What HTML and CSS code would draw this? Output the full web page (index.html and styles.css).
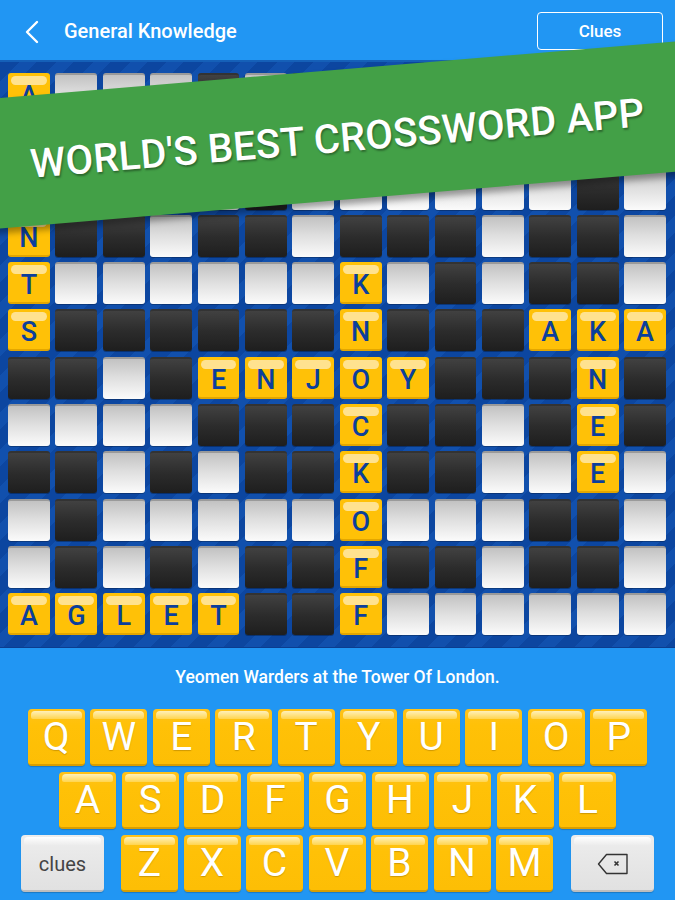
FILE: index.html
```html
<!DOCTYPE html>
<html>
<head>
<meta charset="utf-8">
<link rel="stylesheet" href="styles.css">
</head>
<body>
<div class="app">
  <header class="topbar">
    <div class="back"><svg width="16" height="24" viewBox="0 0 16 24"><path d="M13 2 L3 12 L13 22" fill="none" stroke="#fff" stroke-width="2.4" stroke-linecap="round" stroke-linejoin="round"/></svg></div>
    <div class="title">General Knowledge</div>
    <div class="clues-btn">Clues</div>
  </header>
  <section class="board">
    <div class="grid">
      <div class="c y">A</div><div class="c w"></div><div class="c w"></div><div class="c w"></div><div class="c d"></div><div class="c w"></div><div class="c d"></div><div class="c w"></div><div class="c w"></div><div class="c d"></div><div class="c w"></div><div class="c w"></div><div class="c d"></div><div class="c w"></div>
      <div class="c y">G</div><div class="c d"></div><div class="c w"></div><div class="c d"></div><div class="c w"></div><div class="c d"></div><div class="c w"></div><div class="c d"></div><div class="c d"></div><div class="c w"></div><div class="c d"></div><div class="c d"></div><div class="c w"></div><div class="c w"></div>
      <div class="c y">E</div><div class="c w"></div><div class="c w"></div><div class="c w"></div><div class="c w"></div><div class="c d"></div><div class="c w"></div><div class="c w"></div><div class="c w"></div><div class="c w"></div><div class="c w"></div><div class="c w"></div><div class="c d"></div><div class="c w"></div>
      <div class="c y">N</div><div class="c d"></div><div class="c d"></div><div class="c w"></div><div class="c d"></div><div class="c d"></div><div class="c w"></div><div class="c d"></div><div class="c d"></div><div class="c d"></div><div class="c w"></div><div class="c d"></div><div class="c d"></div><div class="c w"></div>
      <div class="c y">T</div><div class="c w"></div><div class="c w"></div><div class="c w"></div><div class="c w"></div><div class="c w"></div><div class="c w"></div><div class="c y">K</div><div class="c w"></div><div class="c d"></div><div class="c w"></div><div class="c d"></div><div class="c d"></div><div class="c w"></div>
      <div class="c y">S</div><div class="c d"></div><div class="c d"></div><div class="c d"></div><div class="c d"></div><div class="c d"></div><div class="c d"></div><div class="c y">N</div><div class="c d"></div><div class="c d"></div><div class="c d"></div><div class="c y">A</div><div class="c y">K</div><div class="c y">A</div>
      <div class="c d"></div><div class="c d"></div><div class="c w"></div><div class="c d"></div><div class="c y">E</div><div class="c y">N</div><div class="c y">J</div><div class="c y">O</div><div class="c y">Y</div><div class="c d"></div><div class="c d"></div><div class="c d"></div><div class="c y">N</div><div class="c d"></div>
      <div class="c w"></div><div class="c w"></div><div class="c w"></div><div class="c w"></div><div class="c d"></div><div class="c d"></div><div class="c d"></div><div class="c y">C</div><div class="c d"></div><div class="c d"></div><div class="c w"></div><div class="c d"></div><div class="c y">E</div><div class="c d"></div>
      <div class="c d"></div><div class="c d"></div><div class="c w"></div><div class="c d"></div><div class="c w"></div><div class="c d"></div><div class="c d"></div><div class="c y">K</div><div class="c d"></div><div class="c d"></div><div class="c w"></div><div class="c w"></div><div class="c y">E</div><div class="c w"></div>
      <div class="c w"></div><div class="c d"></div><div class="c w"></div><div class="c w"></div><div class="c w"></div><div class="c w"></div><div class="c w"></div><div class="c y">O</div><div class="c w"></div><div class="c w"></div><div class="c w"></div><div class="c d"></div><div class="c d"></div><div class="c w"></div>
      <div class="c w"></div><div class="c d"></div><div class="c w"></div><div class="c d"></div><div class="c w"></div><div class="c d"></div><div class="c d"></div><div class="c y">F</div><div class="c d"></div><div class="c d"></div><div class="c w"></div><div class="c d"></div><div class="c d"></div><div class="c w"></div>
      <div class="c y">A</div><div class="c y">G</div><div class="c y">L</div><div class="c y">E</div><div class="c y">T</div><div class="c d"></div><div class="c d"></div><div class="c y">F</div><div class="c w"></div><div class="c w"></div><div class="c w"></div><div class="c w"></div><div class="c w"></div><div class="c w"></div>
    </div>
  </section>
  <section class="bottom">
    <div class="clue">Yeomen Warders at the Tower Of London.</div>
    <div class="keyboard">
      <div class="krow">
        <div class="key">Q</div><div class="key">W</div><div class="key">E</div><div class="key">R</div><div class="key">T</div><div class="key">Y</div><div class="key">U</div><div class="key">I</div><div class="key">O</div><div class="key">P</div>
      </div>
      <div class="krow">
        <div class="key">A</div><div class="key">S</div><div class="key">D</div><div class="key">F</div><div class="key">G</div><div class="key">H</div><div class="key">J</div><div class="key">K</div><div class="key">L</div>
      </div>
      <div class="krow">
        <div class="key gray cluekey">clues</div>
        <div class="key">Z</div><div class="key">X</div><div class="key">C</div><div class="key">V</div><div class="key">B</div><div class="key">N</div><div class="key">M</div>
        <div class="key gray bskey"><svg width="32" height="22" viewBox="0 0 32 22"><path d="M9.5 1.5 H30 V20.5 H9.5 L1.5 11 Z" fill="none" stroke="#333" stroke-width="1.4" stroke-linejoin="round"/><path d="M17.5 8.5 L21.5 12.5 M21.5 8.5 L17.5 12.5" stroke="#333" stroke-width="1.6"/></svg></div>
      </div>
    </div>
  </section>
  <div class="banner"><span>WORLD'S BEST CROSSWORD APP</span></div>
</div>
</body>
</html>
```
FILE: styles.css
```css
* { box-sizing: border-box; }
html, body { margin: 0; padding: 0; }
body {
  width: 675px;
  height: 900px;
  overflow: hidden;
  font-family: Roboto, "Noto Sans", sans-serif;
  background: #2196F3;
}
.app {
  position: relative;
  width: 675px;
  height: 900px;
  overflow: hidden;
}
.topbar {
  height: 62px;
  background: #2196F3;
  border-bottom: 2px solid #1560b8;
  display: flex;
  align-items: center;
  padding: 2px 12px 0 24px;
}
.back { width: 16px; height: 24px; display: flex; margin-top: 1px; }
.title {
  margin-left: 24px;
  color: #fff;
  font-size: 20px;
  font-weight: 500;
  flex: 1;
}
.clues-btn {
  width: 126px;
  height: 38px;
  border: 1.5px solid #fff;
  border-radius: 4px;
  color: #fff;
  font-size: 17px;
  font-weight: 500;
  display: flex;
  align-items: center;
  justify-content: center;
}
.board {
  height: 586px;
  padding: 11px 9px 10px 8px;
  background-color: #0c46a0;
  background-image: repeating-linear-gradient(135deg, #0c46a0 0 14px, #1150ad 14px 26px);
  border-bottom: 1px solid #0a3d8f;
}
.grid {
  display: grid;
  grid-template-columns: repeat(14, 1fr);
  grid-template-rows: repeat(12, 42px);
  gap: 5.3px 5.5px;
}
.c {
  border-radius: 3px;
  position: relative;
}
.w {
  background: linear-gradient(#c2c2c2, #dedede 45%, #fbfbfb);
  border-top: 2px solid #9a9a9a;
  box-shadow: 0 1px 0 rgba(0,0,0,0.25);
}
.d {
  background: linear-gradient(#414141, #2c2c2c 50%, #1e1e1e);
  border-top: 2px solid #333;
  box-shadow: 0 1px 0 rgba(0,0,0,0.3);
}
.y {
  background: #FFC107;
  border-bottom: 2px solid #e3a600;
  color: #0b3f9c;
  font-size: 27px;
  font-weight: 500;
  display: flex;
  align-items: center;
  justify-content: center;
  padding-top: 6px;
}
.y::before {
  content: "";
  position: absolute;
  left: 3px;
  right: 3px;
  top: 3px;
  height: 9px;
  border-radius: 5px;
  background: #ffe28f;
}
.bottom {
  height: 252px;
  background: #2196F3;
  padding-top: 18px;
}
.clue {
  text-align: center;
  color: #fff;
  font-size: 17.5px;
  font-weight: 500;
  height: 22px;
  line-height: 22px;
}
.keyboard {
  margin-top: 21px;
  display: flex;
  flex-direction: column;
  gap: 6px;
}
.krow {
  display: flex;
  justify-content: center;
  gap: 5.5px;
}
.key {
  position: relative;
  width: 57px;
  height: 57px;
  border-radius: 4px;
  background: linear-gradient(#ffc21a, #FFC107 30%, #fdbe05);
  border-bottom: 2px solid #d99e00;
  color: #fff;
  font-size: 39px;
  font-weight: 400;
  display: flex;
  align-items: center;
  justify-content: center;
  padding-top: 1px;
  text-shadow: 0 1px 1px rgba(120,80,0,0.35);
  box-shadow: 0 1px 1px rgba(0,0,0,0.2);
}
.key::before {
  content: "";
  position: absolute;
  left: 3px;
  right: 3px;
  top: 2px;
  height: 8px;
  border-radius: 4px 4px 2px 2px;
  background: linear-gradient(#fff0b8, #ffd54f);
}
.gray {
  width: 83px;
  background: linear-gradient(#ededed, #e1e1e1);
  border-bottom: 2px solid #bdbdbd;
  color: #444;
  text-shadow: none;
}
.gray::before {
  background: linear-gradient(#ffffff, #ececec);
}
.cluekey {
  font-size: 20px;
  margin-right: 11.5px;
  padding-top: 2px;
}
.bskey {
  margin-left: 12.5px;
}
.bskey svg { position: relative; margin-top: 2px; }
.banner {
  position: absolute;
  left: -63px;
  top: 70px;
  width: 800px;
  height: 130px;
  background: #43a047;
  transform: rotate(-4.8deg);
  box-shadow: 0 5px 6px rgba(0,0,0,0.35);
  display: flex;
  align-items: center;
  justify-content: center;
  padding-top: 7px;
}
.banner span {
  color: #fff;
  font-size: 40px;
  font-weight: 500;
  letter-spacing: 0.2px;
  text-shadow: 1px 2px 2px rgba(0,0,0,0.35);
}
```
